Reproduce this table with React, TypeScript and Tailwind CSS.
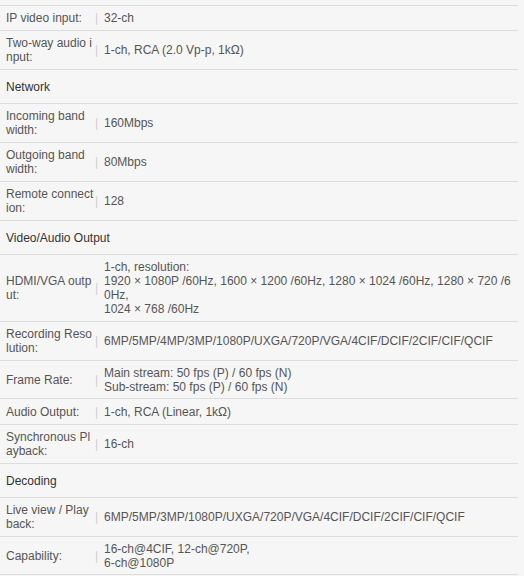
import React from "react";

type Row =
  | { kind: "header"; text: string; h: string }
  | { kind: "data"; label: string[]; value: string[]; h: string };

const rows: Row[] = [
  { kind: "data", label: ["IP video input:"], value: ["32-ch"], h: "h-[25px]" },
  { kind: "data", label: ["Two-way audio i", "nput:"], value: ["1-ch, RCA (2.0 Vp-p, 1kΩ)"], h: "h-[39px]" },
  { kind: "header", text: "Network", h: "h-[34px]" },
  { kind: "data", label: ["Incoming band", "width:"], value: ["160Mbps"], h: "h-[39px]" },
  { kind: "data", label: ["Outgoing band", "width:"], value: ["80Mbps"], h: "h-[39px]" },
  { kind: "data", label: ["Remote connect", "ion:"], value: ["128"], h: "h-[39px]" },
  { kind: "header", text: "Video/Audio Output", h: "h-[34px]" },
  {
    kind: "data",
    label: ["HDMI/VGA outp", "ut:"],
    value: [
      "1-ch, resolution:",
      "1920 × 1080P /60Hz, 1600 × 1200 /60Hz, 1280 × 1024 /60Hz, 1280 × 720 /6",
      "0Hz,",
      "1024 × 768 /60Hz",
    ],
    h: "h-[67px]",
  },
  {
    kind: "data",
    label: ["Recording Reso", "lution:"],
    value: ["6MP/5MP/4MP/3MP/1080P/UXGA/720P/VGA/4CIF/DCIF/2CIF/CIF/QCIF"],
    h: "h-[39px]",
  },
  {
    kind: "data",
    label: ["Frame Rate:"],
    value: ["Main stream: 50 fps (P) / 60 fps (N)", "Sub-stream: 50 fps (P) / 60 fps (N)"],
    h: "h-[38px]",
  },
  { kind: "data", label: ["Audio Output:"], value: ["1-ch, RCA (Linear, 1kΩ)"], h: "h-[26px]" },
  { kind: "data", label: ["Synchronous Pl", "ayback:"], value: ["16-ch"], h: "h-[39px]" },
  { kind: "header", text: "Decoding", h: "h-[34px]" },
  {
    kind: "data",
    label: ["Live view / Play", "back:"],
    value: ["6MP/5MP/3MP/1080P/UXGA/720P/VGA/4CIF/DCIF/2CIF/CIF/QCIF"],
    h: "h-[39px]",
  },
  {
    kind: "data",
    label: ["Capability:"],
    value: ["16-ch@4CIF, 12-ch@720P,", "6-ch@1080P"],
    h: "h-[38px]",
  },
];

export default function App() {
  return (
    <div
      className="w-[524px] h-[576px] bg-[#f6f6f6] pt-[5px] overflow-hidden"
      style={{ fontFamily: '"Liberation Sans", Arial, sans-serif' }}
    >
      <div className="w-[518px] border-t border-[#dcdcdc] text-[12px] leading-[14px]">
        {rows.map((r, i) =>
          r.kind === "header" ? (
            <div
              key={i}
              className={`${r.h} flex items-center border-b border-[#dcdcdc] pl-[6px] text-[#333]`}
            >
              {r.text}
            </div>
          ) : (
            <div
              key={i}
              className={`${r.h} flex items-center border-b border-[#dcdcdc] text-[#555]`}
            >
              <div className="w-[95px] shrink-0 pl-[6px] whitespace-nowrap">
                {r.label.map((l, j) => (
                  <div key={j}>{l}</div>
                ))}
              </div>
              <div className="w-[9px] shrink-0 text-[#cfcfcf]">|</div>
              <div className="flex-1 whitespace-nowrap">
                {r.value.map((v, j) => (
                  <div key={j}>{v}</div>
                ))}
              </div>
            </div>
          )
        )}
      </div>
    </div>
  );
}
